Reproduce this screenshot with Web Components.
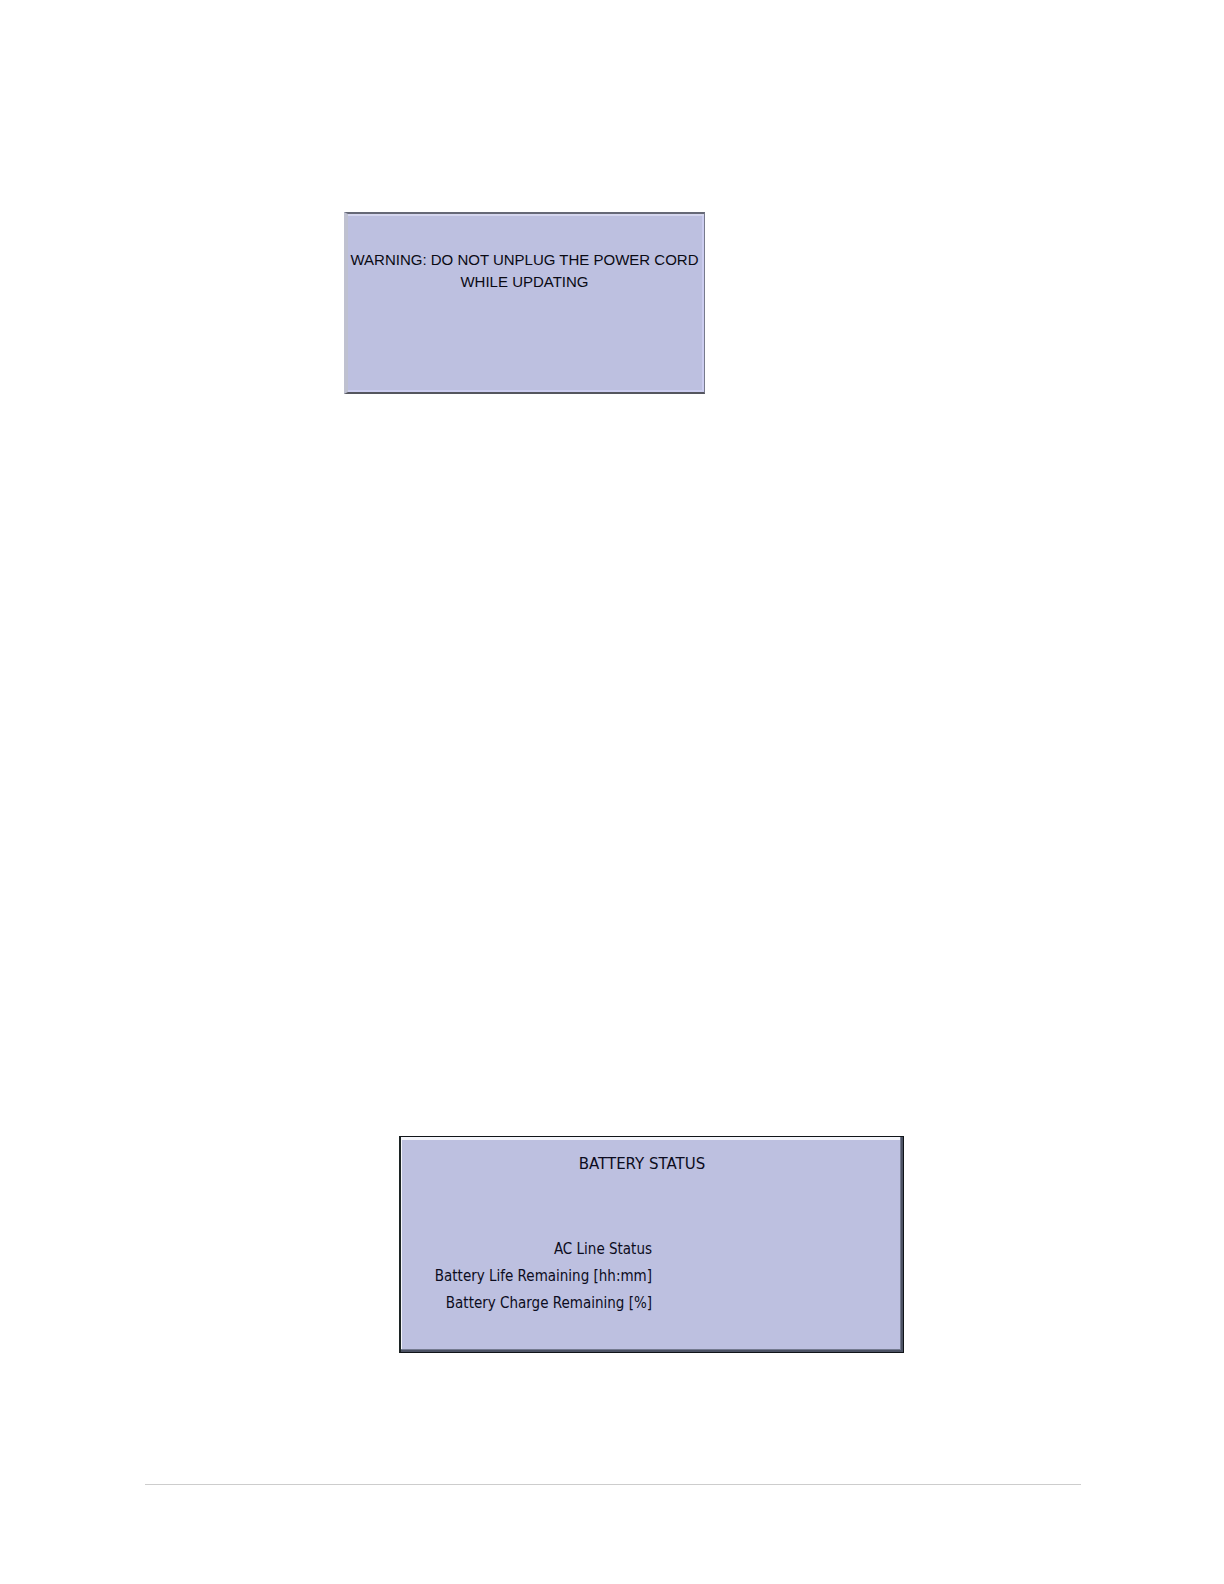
<!DOCTYPE html>
<html lang="en">
<head>
<meta charset="utf-8">
<meta name="viewport" content="width=device-width, initial-scale=1">
<title>Service manual page</title>
<style>
body { margin: 0; background: #fff; color: #0c0c20; font-family: "DejaVu Sans Condensed", "DejaVu Sans", sans-serif; }
</style>
</head>
<body>
<manual-page>
  <warning-panel>WARNING: DO NOT UNPLUG THE POWER CORD WHILE UPDATING</warning-panel>
  <battery-panel>
    <span slot="title">BATTERY STATUS</span>
    <status-row>AC Line Status</status-row>
    <status-row>Battery Life Remaining [hh:mm]</status-row>
    <status-row>Battery Charge Remaining [%]</status-row>
  </battery-panel>
</manual-page>
<script>
const define = (name, markup) => customElements.define(name, class extends HTMLElement {
  constructor() {
    super();
    this.attachShadow({ mode: "open" }).innerHTML = markup;
  }
});

define("manual-page", `
  <style>
    :host { display: block; padding: 212px 143px 98px 145px; }
    main { display: flex; flex-direction: column; gap: 742px; }
    hr { height: 1px; margin: 131px 0 0; border: 0; background: #cdcdcd; }
  </style>
  <main><slot></slot></main>
  <hr>`);

define("warning-panel", `
  <style>
    :host { display: block; box-sizing: border-box; width: 100%; max-width: 361px; min-height: 182px; margin-left: 199px;
      padding: 35px 5px 35px 2px; background: #bdc0e0;
      border: 2px solid; border-color: #666977 #777a8c #55565f #bfc1d0;
      border-left-width: 4px; border-right-width: 1px;
      box-shadow: inset 0 2px #d5d6ee, inset -2px -2px #cccdf0; }
    p { margin: 0; color: #0a0a14; text-align: center; font: 15px/22px "Liberation Sans", Arial, sans-serif; }
  </style>
  <p role="alert"><slot></slot></p>`);

define("battery-panel", `
  <style>
    :host { display: block; box-sizing: border-box; width: 100%; max-width: 505px; min-height: 217px; margin-left: 254px;
      background: #bdc0e0; border: 1px solid #101418; border-left: 2px solid #1c2424;
      box-shadow: inset -2px -2px #4c5264, inset -3px -3px #747a90, inset 1px 3px #f4f5fb; }
    h2 { margin: 0; padding: 16px 20px 0 0; text-align: center; font: 400 15px/22px "DejaVu Sans", sans-serif; }
    .rows { width: 50%; margin-top: 61px; display: flex; flex-direction: column; align-items: flex-end; }
  </style>
  <h2><slot name="title"></slot></h2>
  <div class="rows"><slot></slot></div>`);

define("status-row", `
  <style>:host { display: block; white-space: nowrap; font-size: 15px; line-height: 27px; }</style>
  <slot></slot>`);
</script>
</body>
</html>
